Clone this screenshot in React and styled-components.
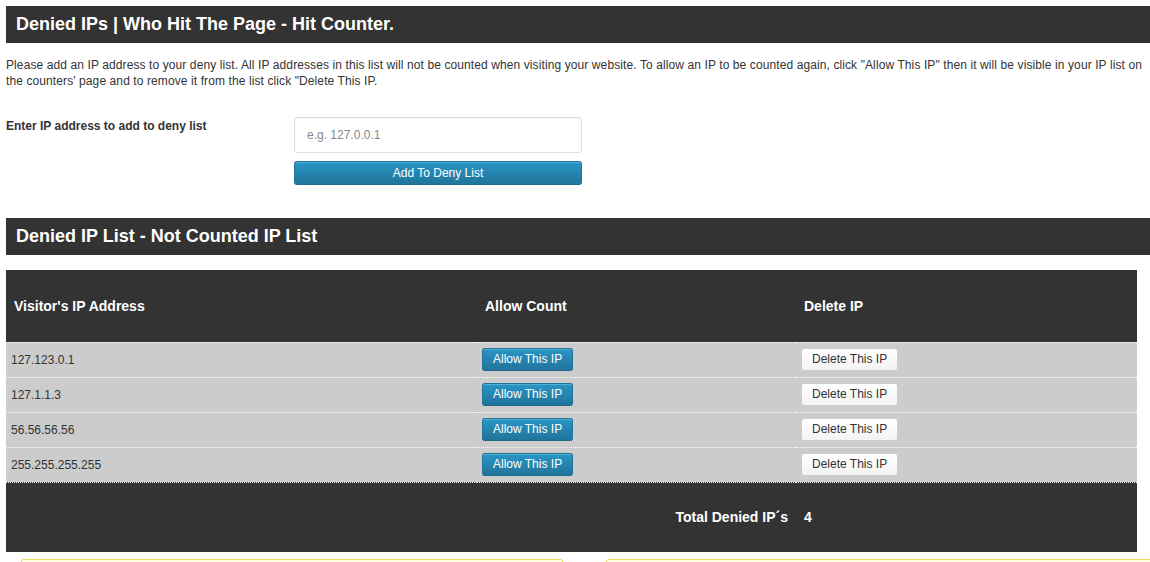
import React from "react"
import styled, { createGlobalStyle } from "styled-components"

const DENIED = ["127.123.0.1", "127.1.1.3", "56.56.56.56", "255.255.255.255"]

const App = () => {
  return (
    <Page>
      <GlobalStyle />
      <SectionTitle>Denied IPs | Who Hit The Page - Hit Counter.</SectionTitle>
      <Intro>
        Please add an IP address to your deny list. All IP addresses in this list will not be
        counted when visiting your website. To allow an IP to be counted again, click "Allow This
        IP" then it will be visible in your IP list on the counters' page and to remove it from the
        list click "Delete This IP.
      </Intro>

      <FormRow>
        <FormLabel>Enter IP address to add to deny list</FormLabel>
        <FormField>
          <IpInput type="text" placeholder="e.g. 127.0.0.1" />
          <BlueButton wide>Add To Deny List</BlueButton>
        </FormField>
      </FormRow>

      <SectionTitle spaced>Denied IP List - Not Counted IP List</SectionTitle>

      <Table>
        <colgroup>
          <col style={{ width: 471 }} />
          <col style={{ width: 319 }} />
          <col style={{ width: 341 }} />
        </colgroup>
        <thead>
          <DarkRow>
            <Th>Visitor's IP Address</Th>
            <Th>Allow Count</Th>
            <Th>Delete IP</Th>
          </DarkRow>
        </thead>
        <tbody>
          {DENIED.map(ip => (
            <BodyRow key={ip}>
              <Td>{ip}</Td>
              <Td>
                <BlueButton>Allow This IP</BlueButton>
              </Td>
              <Td>
                <WhiteButton>Delete This IP</WhiteButton>
              </Td>
            </BodyRow>
          ))}
        </tbody>
        <tfoot>
          <DarkRow footer>
            <Th />
            <Th right>Total Denied IP´s</Th>
            <Th>4</Th>
          </DarkRow>
        </tfoot>
      </Table>

      <Notices>
        <Notice />
        <Notice />
      </Notices>
    </Page>
  )
}

export default App

const GlobalStyle = createGlobalStyle`
  html, body {
    margin: 0;
    padding: 0;
    background: #ffffff;
    overflow: hidden;
  }
  body {
    font-family: "Liberation Sans", Arial, sans-serif;
    font-size: 12px;
    color: #333333;
  }
`

const Page = styled.div`
  padding: 6px 0 0 6px;
  width: 1144px;
`

const SectionTitle = styled.h2`
  margin: ${props => (props.spaced ? "33px 0 0" : "0")};
  height: 37px;
  line-height: 37px;
  padding: 0 10px;
  background: #333333;
  color: #ffffff;
  font-size: 18px;
  font-weight: bold;
`

const Intro = styled.p`
  margin: 14px 0 0;
  width: 1140px;
  line-height: 16px;
  font-size: 12px;
  letter-spacing: 0.1px;
  color: #333333;
`

const FormRow = styled.div`
  display: flex;
  margin-top: 28px;
`

const FormLabel = styled.label`
  width: 288px;
  flex-shrink: 0;
  font-weight: bold;
  line-height: 16px;
  padding-top: 1px;
`

const FormField = styled.div`
  width: 288px;
  display: flex;
  flex-direction: column;
  gap: 8px;
`

const IpInput = styled.input`
  box-sizing: border-box;
  width: 288px;
  height: 36px;
  padding: 0 12px;
  border: 1px solid #dddddd;
  border-radius: 3px;
  font-family: "Liberation Sans", Arial, sans-serif;
  font-size: 12px;
  color: #333333;
  outline: none;
  box-shadow: inset 0 1px 2px rgba(0, 0, 0, 0.04);

  &::placeholder {
    color: #888888;
  }
`

const BlueButton = styled.button`
  box-sizing: border-box;
  width: ${props => (props.wide ? "288px" : "auto")};
  height: ${props => (props.wide ? "24px" : "23px")};
  padding: 0 10px;
  border: 1px solid #21759b;
  border-bottom-color: #1e6a8d;
  border-radius: 3px;
  background: linear-gradient(to bottom, #2a95c5, #21759b);
  box-shadow: inset 0 1px 0 rgba(120, 200, 230, 0.5);
  color: #ffffff;
  font-family: "Liberation Sans", Arial, sans-serif;
  font-size: 12px;
  line-height: 21px;
  cursor: pointer;
`

const WhiteButton = styled.button`
  box-sizing: border-box;
  height: 23px;
  padding: 0 10px;
  border: 1px solid #cccccc;
  border-radius: 3px;
  background: linear-gradient(to bottom, #ffffff, #f3f3f3);
  color: #333333;
  font-family: "Liberation Sans", Arial, sans-serif;
  font-size: 12px;
  line-height: 21px;
  cursor: pointer;
`

const Table = styled.table`
  margin-top: 15px;
  width: 1131px;
  table-layout: fixed;
  border-collapse: collapse;
  border-spacing: 0;
`

const DarkRow = styled.tr`
  background: #333333;
  height: ${props => (props.footer ? "70px" : "72px")};
  border-top: ${props => (props.footer ? "1px dotted #ffffff" : "none")};
  border-bottom: ${props => (props.footer ? "1px dotted #ffffff" : "none")};
`

const Th = styled.th`
  padding: 0 8px;
  text-align: ${props => (props.right ? "right" : "left")};
  color: #ffffff;
  font-size: 14px;
  font-weight: bold;
`

const BodyRow = styled.tr`
  background: #cccccc;
  height: 35px;
  border-top: 1px dotted #ffffff;
`

const Td = styled.td`
  padding: 0 5px;
  color: #333333;
  font-size: 12px;
`

const Notices = styled.div`
  display: flex;
  margin-top: 6px;
  padding-left: 15px;
  gap: 43px;
`

const Notice = styled.div`
  flex: 0 0 540px;
  height: 20px;
  background: #ffffe0;
  border: 1px solid #e6db55;
  border-radius: 3px;

  &:last-child {
    flex: 1 0 auto;
    margin-right: -10px;
  }
`
